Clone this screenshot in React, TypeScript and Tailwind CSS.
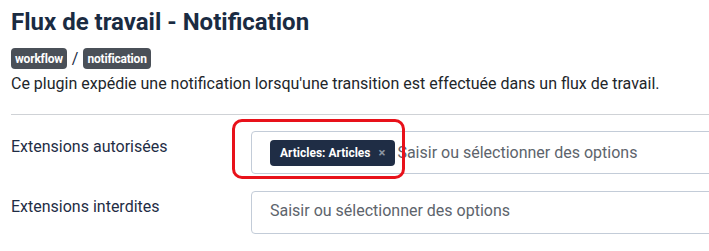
import React from "react";

const font = { fontFamily: "Roboto, 'Noto Sans', sans-serif" };

function Badge({ children }: { children: React.ReactNode }) {
    return (
        <span className="inline-flex h-[21px] items-center rounded-[4px] bg-[#4a5058] px-[4px] text-[12px] font-bold leading-none tracking-[-0.2px] text-white">
            {children}
        </span>
    );
}

function Field({ label, children }: { label: string; children: React.ReactNode }) {
    return (
        <div className="flex items-start">
            <label className="w-[240px] shrink-0 pt-[4px] text-[16px] leading-[24px] text-[#1f2d45]">{label}</label>
            <div className="flex h-[43px] w-[520px] shrink-0 items-center rounded-[4px] border border-[#c3ccd8] bg-white pl-[18px]">
                {children}
            </div>
        </div>
    );
}

export default function App() {
    return (
        <div className="relative h-[251px] w-[709px] overflow-hidden bg-white pl-[11px]" style={font}>
            <h1 className="mt-[8px] text-[24px] font-bold leading-[29px] text-[#1a2b42]">Flux de travail - Notification</h1>

            <div className="mt-[11px] flex items-center gap-[5px]">
                <Badge>workflow</Badge>
                <span className="text-[16px] leading-none text-[#1a2b42]">/</span>
                <Badge>notification</Badge>
            </div>

            <p className="mt-[3px] text-[16px] leading-[24px] text-[#22262a]">
                Ce plugin expédie une notification lorsqu'une transition est effectuée dans un flux de travail.
            </p>

            <hr className="mt-[18px] border-t border-[#cfd2d6]" />

            <div className="mt-[16px] flex flex-col gap-[17px]">
                <Field label="Extensions autorisées">
                    <span className="inline-flex h-[26px] items-center gap-[8px] rounded-[4px] bg-[#1f2d45] pl-[10px] pr-[10px] text-[12px] font-bold text-white">
                        Articles: Articles
                        <span className="text-[13px] font-bold text-[#8c96a3]">×</span>
                    </span>
                    <span className="ml-[2px] text-[16px] text-[#5d646c]">Saisir ou sélectionner des options</span>
                </Field>
                <Field label="Extensions interdites">
                    <span className="-mt-[3px] text-[16px] text-[#5d646c]">Saisir ou sélectionner des options</span>
                </Field>
            </div>

            {/* annotation highlight */}
            <div className="pointer-events-none absolute left-[232px] top-[119px] h-[60px] w-[173px] rounded-[10px] border-[3px] border-[#e8111a]" />
        </div>
    );
}
